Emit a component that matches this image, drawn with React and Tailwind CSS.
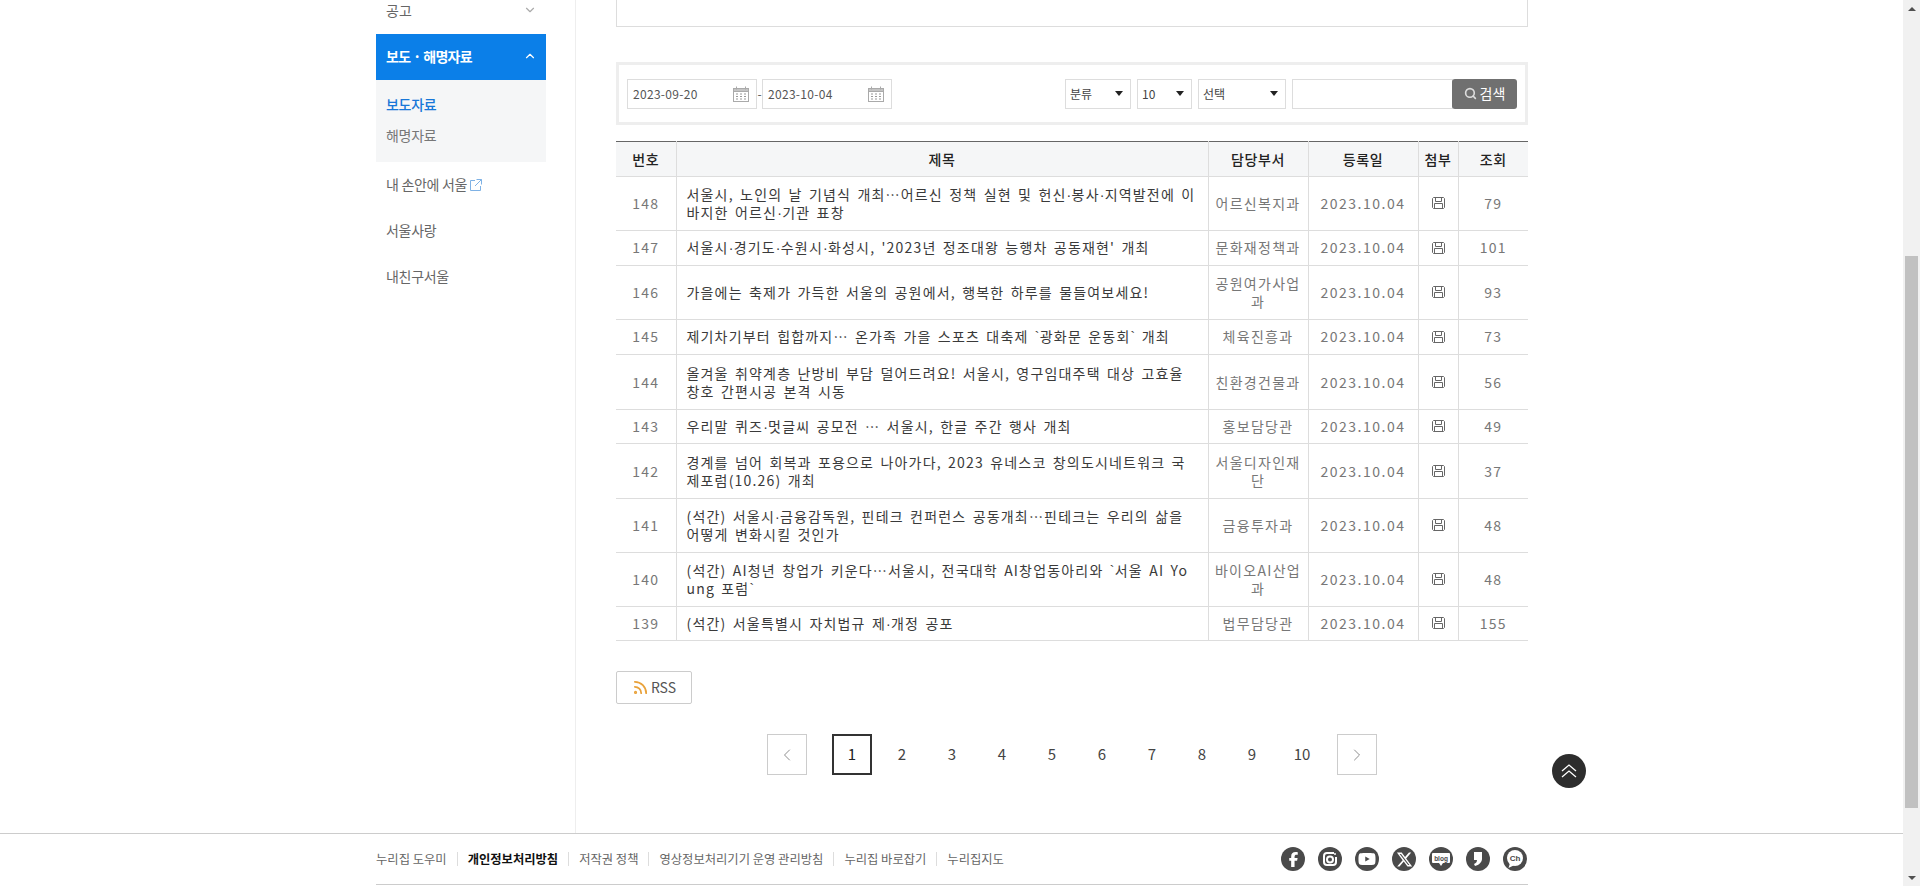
import React from "react";
import { ChevronDown, ChevronUp, ChevronLeft, ChevronRight, Rss, Search } from "lucide-react";
import { FaFacebookF, FaYoutube, FaXTwitter } from "react-icons/fa6";

const rows = [
  [148, "서울시, 노인의 날 기념식 개최…어르신 정책 실현 및 헌신·봉사·지역발전에 이\n바지한 어르신·기관 표창", "어르신복지과", 79, "h-[54px]"],
  [147, "서울시·경기도·수원시·화성시, '2023년 정조대왕 능행차 공동재현' 개최", "문화재정책과", 101, "h-[35px]"],
  [146, "가을에는 축제가 가득한 서울의 공원에서, 행복한 하루를 물들여보세요!", "공원여가사업\n과", 93, "h-[54px]"],
  [145, "제기차기부터 힙합까지… 온가족 가을 스포츠 대축제 `광화문 운동회` 개최", "체육진흥과", 73, "h-[35px]"],
  [144, "올겨울 취약계층 난방비 부담 덜어드려요! 서울시, 영구임대주택 대상 고효율\n창호 간편시공 본격 시동", "친환경건물과", 56, "h-[55px]"],
  [143, "우리말 퀴즈·멋글씨 공모전 … 서울시, 한글 주간 행사 개최", "홍보담당관", 49, "h-[34px]"],
  [142, "경계를 넘어 회복과 포용으로 나아가다, 2023 유네스코 창의도시네트워크 국\n제포럼(10.26) 개최", "서울디자인재\n단", 37, "h-[55px]"],
  [141, "(석간) 서울시·금융감독원, 핀테크 컨퍼런스 공동개최…핀테크는 우리의 삶을\n어떻게 변화시킬 것인가", "금융투자과", 48, "h-[54px]"],
  [140, "(석간) AI청년 창업가 키운다…서울시, 전국대학 AI창업동아리와 `서울 AI Yo\nung 포럼`", "바이오AI산업\n과", 48, "h-[54px]"],
  [139, "(석간) 서울특별시 자치법규 제·개정 공포", "법무담당관", 155, "h-[34px]"],
];

const Title = ({ text }) =>
  text.split("\n").map((line, l) => (
    <div key={l} className="h-[18px]">
      {line.split(/([·`])/).map((part, i) =>
        part === "·" || part === "`" ? (
          <span key={i} className="font-['Liberation_Sans'] tracking-[0.3px]">{part}</span>
        ) : (
          <React.Fragment key={i}>{part}</React.Fragment>
        )
      )}
    </div>
  ));

const CalIcon = () => (
  <svg width="16" height="16" viewBox="0 0 16 16" fill="none" stroke="#aaa" strokeWidth="1">
    <rect x="0.5" y="2.5" width="15" height="13" />
    <rect x="0.5" y="2.5" width="15" height="3" fill="#c4c4c4" />
    <path d="M3.5 0.5V3.5M12.5 0.5V3.5" />
    <path d="M3 8h2M7 8h2M11 8h2M3 10.5h2M7 10.5h2M11 10.5h2M3 13h2M7 13h2M11 13h2" stroke="#999" />
  </svg>
);

const SaveIcon = () => (
  <svg width="13" height="12" viewBox="0 0 13 12" fill="none" stroke="#666" strokeWidth="1" className="block mx-auto -mt-[1px]">
    <path d="M1.5 0.5H11.5L12.5 1.5V10.5L11.5 11.5H1.5L0.5 10.5V1.5Z" />
    <path d="M3.5 0.5V4.5H9.5V0.5M2.5 11.5V6.5H10.5V11.5" />
  </svg>
);

const Select = ({ label, w }) => (
  <div className={`${w} h-[30px] border border-[#ddd] bg-white flex items-center justify-between pl-[4px] pr-[7px] text-[12px] text-[#444]`}>
    <span>{label}</span>
    <span className="w-0 h-0 border-l-[4px] border-r-[4px] border-t-[5px] border-l-transparent border-r-transparent border-t-[#222]" />
  </div>
);

const DateInput = ({ v }) => (
  <div className="w-[130px] h-[30px] border border-[#ddd] bg-white flex items-center justify-between pl-[5px] pr-[7px] text-[12px] text-[#555] tracking-[0.3px]">
    <span>{v}</span>
    <CalIcon />
  </div>
);

const Social = ({ children }) => (
  <span className="w-[24px] h-[24px] rounded-full bg-[#4a4a4a] flex items-center justify-center text-white shrink-0">{children}</span>
);

const MenuRow = ({ children, h = "h-[46px]" }) => (
  <div className={`${h} flex items-center pl-[10px] text-[14px] text-[#666] -tracking-[0.3px]`}>{children}</div>
);

const footerLinks = ["누리집 도우미", "개인정보처리방침", "저작권 정책", "영상정보처리기기 운영 관리방침", "누리집 바로잡기", "누리집지도"];

const tdBase = "border-b border-[#ddd] text-center text-[#777] tracking-[1.3px]";

export default function App() {
  return (
    <div className="w-[1920px] h-[886px] overflow-hidden flex bg-white font-['Noto_Sans_CJK_KR','Noto_Sans',sans-serif]">
      <div className="w-[1903px] shrink-0 flex flex-col relative">
        <div className="h-[833px] shrink-0 flex pl-[376px]">
          <aside className="w-[200px] shrink-0 border-r border-[#eee] pr-[29px]">
            <div className="h-[34px] flex items-start justify-between pl-[10px] pr-[9px] text-[14px] text-[#666] leading-[20px]">
              <span>공고</span>
              <ChevronDown size={14} color="#aaa" className="mt-[3px]" />
            </div>
            <div className="h-[46px] pb-[2px] bg-[#0b7fe8] flex items-center justify-between pl-[10px] pr-[9px] text-white text-[14px] font-bold -tracking-[0.65px]">
              <span>보도 · 해명자료</span>
              <ChevronUp size={14} color="#fff" />
            </div>
            <div className="h-[82px] bg-[#f5f6f7] pl-[10px] pt-[14px] text-[14px] leading-[20px] -tracking-[0.3px]">
              <div className="text-[#1877d8] font-medium h-[31px]">보도자료</div>
              <div className="text-[#777]">해명자료</div>
            </div>
            <MenuRow h="h-[45px]">
              <span>내 손안에 서울</span>
              <svg width="12" height="12" viewBox="0 0 12 12" fill="none" stroke="#7fb2e5" strokeWidth="1" className="ml-[3px]">
                <path d="M5 1.5H0.5V11.5H10.5V7M6.5 0.5H11.5V5.5M11.5 0.5L5 7" />
              </svg>
            </MenuRow>
            <MenuRow>서울사랑</MenuRow>
            <MenuRow>내친구서울</MenuRow>
          </aside>
          <main className="w-[912px] ml-[40px] shrink-0">
            <div className="h-[27px] border border-t-0 border-[#ddd] mb-[35px]" />
            <div className="h-[63px] border-[3px] border-[#eeeeee] flex items-center pl-[8px] pr-[8px]">
              <DateInput v="2023-09-20" />
              <span className="w-[5px] text-center text-[12px] text-[#555]">-</span>
              <DateInput v="2023-10-04" />
              <div className="ml-auto flex items-center">
                <Select label="분류" w="w-[66px]" />
                <div className="w-[6px]" />
                <Select label="10" w="w-[55px]" />
                <div className="w-[6px]" />
                <Select label="선택" w="w-[88px]" />
                <div className="w-[6px]" />
                <div className="w-[161px] h-[30px] border border-[#ddd] bg-white" />
                <button className="w-[65px] h-[30px] -ml-[1px] rounded-[3px] bg-[#707070] text-white text-[14px] flex items-center justify-center gap-[3px]">
                  <Search size={13} strokeWidth={3} color="#ddd" />
                  <span>검색</span>
                </button>
              </div>
            </div>
            <table className="mt-[16px] w-[912px] table-fixed border-collapse border-t border-t-[#666]">
              <colgroup>
                <col className="w-[60px]" />
                <col className="w-[532px]" />
                <col className="w-[100px]" />
                <col className="w-[110px]" />
                <col className="w-[40px]" />
                <col className="w-[70px]" />
              </colgroup>
              <thead>
                <tr className="h-[35px] bg-[#f5f6f7] text-[14px] text-[#222] tracking-[0.6px]">
                  <th className="font-medium border-b border-r border-[#ddd]">번호</th>
                  <th className="font-medium border-b border-r border-[#ddd]">제목</th>
                  <th className="font-medium border-b border-r border-[#ddd]">담당부서</th>
                  <th className="font-medium border-b border-r border-[#ddd]">등록일</th>
                  <th className="font-medium border-b border-r border-[#ddd]">첨부</th>
                  <th className="font-medium border-b border-[#ddd]">조회</th>
                </tr>
              </thead>
              <tbody>
                {rows.map((r) => {
                  const pb = r[4] === "h-[35px]" || r[4] === "h-[34px]" ? "pb-[2px]" : "pb-[1px]";
                  return (
                    <tr key={r[0]} className={`${r[4]} text-[14px] leading-[18px]`}>
                      <td className={`${tdBase} border-r ${pb}`}>{r[0]}</td>
                      <td className={`border-b border-r border-[#ddd] pl-[10px] ${pb} text-[#3a3a3a] tracking-[1.18px] [word-spacing:2px] whitespace-pre`}>
                        <Title text={r[1]} />
                      </td>
                      <td className={`${tdBase} border-r ${pb} whitespace-pre`}>{r[2]}</td>
                      <td className={`${tdBase} border-r ${pb} tracking-[1.5px]`}>2023.10.04</td>
                      <td className="border-b border-r border-[#ddd] text-center"><SaveIcon /></td>
                      <td className={`${tdBase} ${pb}`}>{r[3]}</td>
                    </tr>
                  );
                })}
              </tbody>
            </table>
            <div className="mt-[30px] w-[76px] h-[33px] border border-[#ccc] rounded-[2px] flex items-center justify-center gap-[2px] text-[14px] text-[#555]">
              <Rss size={17} strokeWidth={2.5} color="#e9a23b" />
              <span>RSS</span>
            </div>
            <div className="mt-[30px] ml-[151px] flex items-center text-[15px] text-[#444]">
              <div className="w-[40px] h-[41px] border border-[#ccc] flex items-center justify-center mr-[25px]">
                <ChevronLeft size={20} strokeWidth={1} color="#777" />
              </div>
              <div className="w-[40px] h-[41px] border-2 border-[#333] flex items-center justify-center text-[#222]">1</div>
              {[2, 3, 4, 5, 6, 7, 8, 9, 10].map((n) => (
                <div key={n} className="w-[40px] h-[41px] ml-[10px] flex items-center justify-center">{n}</div>
              ))}
              <div className="w-[40px] h-[41px] border border-[#ccc] flex items-center justify-center ml-[15px]">
                <ChevronRight size={20} strokeWidth={1} color="#777" />
              </div>
            </div>
          </main>
        </div>
        <footer className="border-t border-[#ccc] h-[53px] pl-[376px] pr-[375px] shrink-0">
          <div className="w-[1152px] h-[51px] border-b border-[#ccc] flex items-center justify-between">
            <div className="flex items-center text-[12.3px] text-[#666]">
              {footerLinks.map((t, i) => (
                <React.Fragment key={t}>
                  {i > 0 && <span className="w-px h-[14px] bg-[#ddd] mx-[10px]" />}
                  <span className={i === 1 ? "font-bold text-[#111]" : ""}>{t}</span>
                </React.Fragment>
              ))}
            </div>
            <div className="flex items-center gap-[13px] mr-[1px]">
              <Social><FaFacebookF size={15} /></Social>
              <Social>
                <svg width="16" height="16" viewBox="0 0 16 16" fill="none" stroke="#fff" strokeWidth="2">
                  <path d="M12 2H5a3 3 0 0 0-3 3v6a3 3 0 0 0 3 3h6a3 3 0 0 0 3-3V6" />
                  <circle cx="8" cy="8.5" r="3" />
                  <circle cx="13" cy="3" r="1" fill="#fff" stroke="none" />
                </svg>
              </Social>
              <Social><FaYoutube size={18} /></Social>
              <Social><FaXTwitter size={17} /></Social>
              <Social>
                <svg width="20" height="18" viewBox="0 0 20 18">
                  <path d="M2 3h16a1 1 0 0 1 1 1v8a1 1 0 0 1-1 1h-6l-2 3-2-3H2a1 1 0 0 1-1-1V4a1 1 0 0 1 1-1z" fill="#fff" />
                  <text x="10" y="10.5" textAnchor="middle" fontSize="6.5" fontWeight="700" fill="#4a4a4a" fontFamily="Liberation Sans, sans-serif">blog</text>
                </svg>
              </Social>
              <Social>
                <svg width="12" height="16" viewBox="0 0 12 16"><path d="M2 1h8v7c0 3-3 6-7 7l-1-2c2-1 3-2 3-4H2z" fill="#fff" /></svg>
              </Social>
              <Social>
                <svg width="20" height="20" viewBox="0 0 20 20">
                  <circle cx="10" cy="9" r="8" fill="#fff" />
                  <path d="M5 14l-1.5 5 6-3z" fill="#fff" />
                  <text x="10" y="12" textAnchor="middle" fontSize="8" fontWeight="700" fill="#4a4a4a" fontFamily="Liberation Sans, sans-serif">Ch</text>
                </svg>
              </Social>
            </div>
          </div>
        </footer>
        <div className="absolute left-[1552px] top-[754px] w-[34px] h-[34px] rounded-full bg-[#2d2d2d] flex items-center justify-center">
          <svg width="16" height="14" viewBox="0 0 16 14" fill="none" stroke="#fff" strokeWidth="1.3">
            <path d="M1 7L8 1L15 7M1 13L8 7L15 13" />
          </svg>
        </div>
      </div>
      <div className="w-[17px] shrink-0 bg-[#f1f1f1] flex flex-col items-center relative">
        <div className="h-[17px] flex items-center justify-center shrink-0">
          <span className="w-0 h-0 border-l-[4px] border-r-[4px] border-b-[4px] border-l-transparent border-r-transparent border-b-[#505050]" />
        </div>
        <div className="mt-[239px] w-[13px] h-[552px] bg-[#c1c1c1] shrink-0" />
        <div className="mt-auto h-[17px] flex items-center justify-center shrink-0">
          <span className="w-0 h-0 border-l-[4px] border-r-[4px] border-t-[4px] border-l-transparent border-r-transparent border-t-[#505050]" />
        </div>
      </div>
    </div>
  );
}
